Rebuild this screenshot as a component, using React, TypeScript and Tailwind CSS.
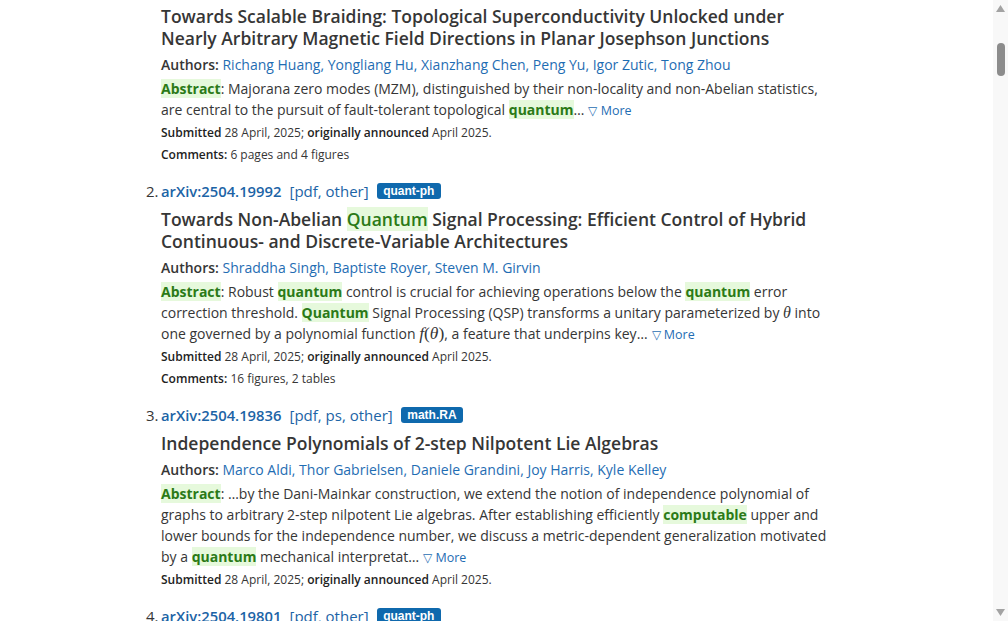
import React from "react";

const LINK = "text-[#1f6db3]";
const ID = "text-[#1c64a6]";

function Hit({ children, bold = true }: { children: React.ReactNode; bold?: boolean }) {
  return (
    <span className={`bg-[#e6f9dc] text-[#2b7a17] ${bold ? "font-bold" : ""}`}>{children}</span>
  );
}

function More() {
  return (
    <span className={`${LINK} text-[12.5px] ml-[4px]`}>
      <span className="text-[12px]">▽</span> More
    </span>
  );
}

function Header({ n, id, formats, tag }: { n: number; id: string; formats: string[]; tag: string }) {
  return (
    <div className="flex items-center h-[24px] text-[15px] -ml-[15px]">
      <span className="w-[15px] text-[#363636]">{n}.</span>
      <span className={`${ID} font-semibold text-[14.8px]`}>arXiv:{id}</span>
      <span className={`${ID} ml-[8px]`}>
        [
        {formats.map((f, i) => (
          <React.Fragment key={f}>
            {i > 0 && ", "}
            {f}
          </React.Fragment>
        ))}
        ]
      </span>
      <span className="ml-[8px] h-[16px] px-[6.5px] rounded-[3px] bg-[#0f69ad] text-white text-[12px] font-['Liberation_Sans',Arial,sans-serif] font-bold flex items-center leading-none">
        {tag}
      </span>
    </div>
  );
}

function Authors({ names }: { names: string[] }) {
  return (
    <div className="mt-[5px] text-[14px] leading-[21px]">
      <span className="font-semibold text-[#363636]">Authors: </span>
      {names.map((a, i) => (
        <span key={a} className={LINK}>
          {a}
          {i < names.length - 1 ? ", " : ""}
        </span>
      ))}
    </div>
  );
}

function Submitted() {
  return (
    <div className="mt-[3px] text-[12px] leading-[18px] text-[#363636]">
      <span className="font-semibold text-[#222]">Submitted</span> 28 April, 2025;{" "}
      <span className="font-semibold text-[#222]">originally announced</span> April 2025.
    </div>
  );
}

function Comments({ text }: { text: string }) {
  return (
    <div className="mt-[4px] text-[12px] leading-[18px] text-[#363636]">
      <span className="font-semibold text-[#222]">Comments:</span> {text}
    </div>
  );
}

function Title({ children, first = false }: { children: React.ReactNode; first?: boolean }) {
  return (
    <div
      className={`${first ? "" : "mt-[5px]"} text-[17.5px] leading-[22px] font-semibold text-[#363636] whitespace-nowrap`}
    >
      {children}
    </div>
  );
}

function Abstract({ children }: { children: React.ReactNode }) {
  return (
    <div className="mt-[3px] text-[14px] leading-[21px] text-[#363636] whitespace-nowrap">
      <Hit>Abstract</Hit>: {children}
    </div>
  );
}

const Theta = () => (
  <span className="font-['Liberation_Serif',serif] italic text-[16px] leading-none">θ</span>
);

export default function App() {
  return (
    <div className="flex w-[1008px] h-[621px] overflow-hidden bg-white font-['Open_Sans',sans-serif]">
      <div className="flex-1 pl-[161px] pt-[5px] overflow-hidden">
        {/* Item 1 (header above viewport) */}
        <div className="pb-[15px]">
          <Title first>
            Towards Scalable Braiding: Topological Superconductivity Unlocked under
            <br />
            Nearly Arbitrary Magnetic Field Directions in Planar Josephson Junctions
          </Title>
          <Authors
            names={["Richang Huang", "Yongliang Hu", "Xianzhang Chen", "Peng Yu", "Igor Zutic", "Tong Zhou"]}
          />
          <Abstract>
            Majorana zero modes (MZM), distinguished by their non-locality and non-Abelian statistics,
            <br />
            are central to the pursuit of fault-tolerant topological <Hit>quantum</Hit>…<More />
          </Abstract>
          <Submitted />
          <Comments text="6 pages and 4 figures" />
        </div>

        {/* Item 2 */}
        <div className="pb-[15px]">
          <Header n={2} id="2504.19992" formats={["pdf", "other"]} tag="quant-ph" />
          <Title>
            Towards Non-Abelian <Hit bold={false}>Quantum</Hit> Signal Processing: Efficient Control of Hybrid
            <br />
            Continuous- and Discrete-Variable Architectures
          </Title>
          <Authors names={["Shraddha Singh", "Baptiste Royer", "Steven M. Girvin"]} />
          <Abstract>
            Robust <Hit>quantum</Hit> control is crucial for achieving operations below the <Hit>quantum</Hit> error
            <br />
            correction threshold. <Hit>Quantum</Hit> Signal Processing (QSP) transforms a unitary parameterized by{" "}
            <Theta /> into
            <br />
            one governed by a polynomial function{" "}
            <span className="font-['Liberation_Serif',serif] text-[17.5px] leading-none">
              <i>f</i>(<i>θ</i>)
            </span>
            , a feature that underpins key…<More />
          </Abstract>
          <Submitted />
          <Comments text="16 figures, 2 tables" />
        </div>

        {/* Item 3 */}
        <div className="pb-[15px]">
          <Header n={3} id="2504.19836" formats={["pdf", "ps", "other"]} tag="math.RA" />
          <Title>Independence Polynomials of 2-step Nilpotent Lie Algebras</Title>
          <Authors names={["Marco Aldi", "Thor Gabrielsen", "Daniele Grandini", "Joy Harris", "Kyle Kelley"]} />
          <Abstract>
            …by the Dani-Mainkar construction, we extend the notion of independence polynomial of
            <br />
            graphs to arbitrary 2-step nilpotent Lie algebras. After establishing efficiently <Hit>computable</Hit> upper and
            <br />
            lower bounds for the independence number, we discuss a metric-dependent generalization motivated
            <br />
            by a <Hit>quantum</Hit> mechanical interpretat…<More />
          </Abstract>
          <Submitted />
        </div>

        {/* Item 4 */}
        <div>
          <Header n={4} id="2504.19801" formats={["pdf", "other"]} tag="quant-ph" />
        </div>
      </div>

      {/* Scrollbar */}
      <div className="w-[15px] h-full bg-[#f8f8f8] flex flex-col items-center">
        <svg width="9" height="7" viewBox="0 0 9 7" className="mt-[5px]">
          <polygon points="4.5,0 9,7 0,7" fill="#a3a3a3" />
        </svg>
        <div className="mt-[31px] w-[8px] h-[33px] rounded-full bg-[#8c8c8c]" />
        <div className="flex-1" />
        <svg width="9" height="7" viewBox="0 0 9 7" className="mb-[5px]">
          <polygon points="0,0 9,0 4.5,7" fill="#a3a3a3" />
        </svg>
      </div>
    </div>
  );
}
